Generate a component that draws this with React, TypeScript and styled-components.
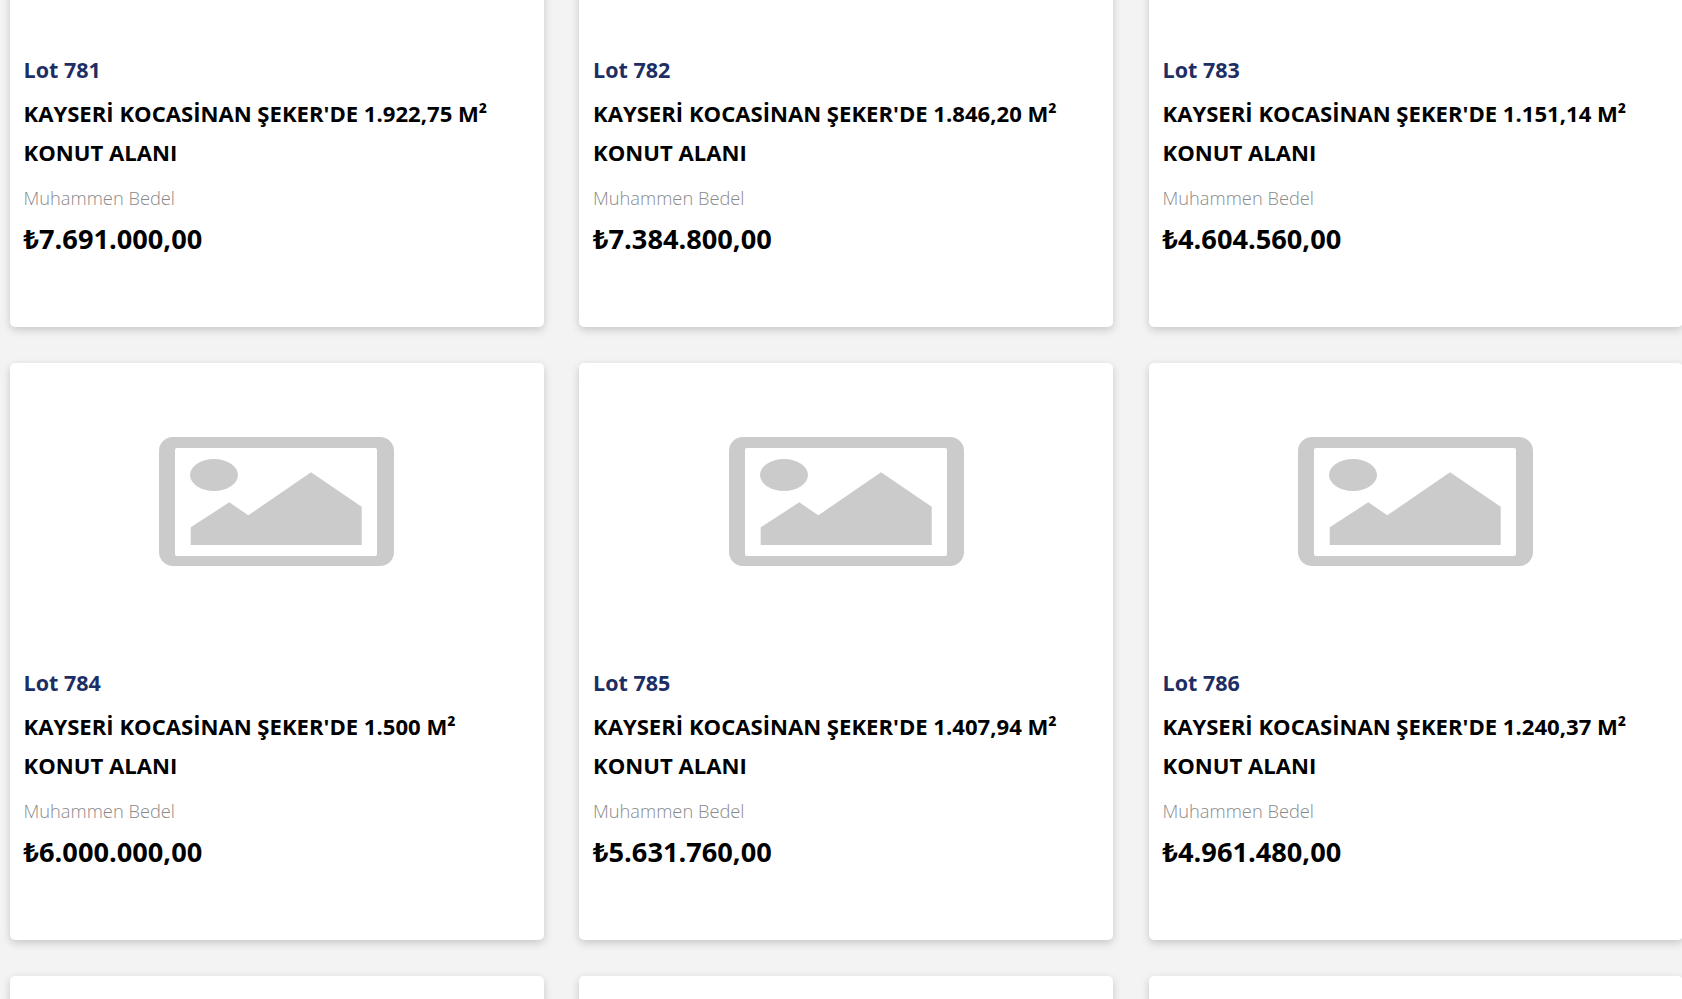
import React from "react";
import styled, { createGlobalStyle } from "styled-components";

interface Lot {
  no: number;
  area: string;
  price: string;
}

const lots: Lot[] = [
  { no: 781, area: "1.922,75", price: "7.691.000,00" },
  { no: 782, area: "1.846,20", price: "7.384.800,00" },
  { no: 783, area: "1.151,14", price: "4.604.560,00" },
  { no: 784, area: "1.500", price: "6.000.000,00" },
  { no: 785, area: "1.407,94", price: "5.631.760,00" },
  { no: 786, area: "1.240,37", price: "4.961.480,00" },
];

function PlaceholderIcon() {
  return (
    <svg width="235" height="129" viewBox="0 0 235 129">
      <path
        fillRule="evenodd"
        fill="#cbcbcb"
        d="M14 0H221A14 14 0 0 1 235 14V115A14 14 0 0 1 221 129H14A14 14 0 0 1 0 115V14A14 14 0 0 1 14 0ZM18 11A2 2 0 0 0 16 13V117A2 2 0 0 0 18 119H216A2 2 0 0 0 218 117V13A2 2 0 0 0 216 11Z"
      />
      <ellipse cx="55" cy="38" rx="24" ry="16" fill="#cbcbcb" />
      <path
        fill="#cbcbcb"
        d="M31.7 108V90.3L70.3 65.3L89.3 78.3L152 35.3L202.7 69.7V108Z"
      />
    </svg>
  );
}

function LotCard({ lot }: { lot: Lot }) {
  return (
    <Card>
      <Thumb>
        <PlaceholderIcon />
      </Thumb>
      <Body>
        <LotNo>{`Lot ${lot.no}`}</LotNo>
        <Title>{`KAYSERİ KOCASİNAN ŞEKER'DE ${lot.area} M² KONUT ALANI`}</Title>
        <PriceLabel>Muhammen Bedel</PriceLabel>
        <Price>{`₺${lot.price}`}</Price>
      </Body>
    </Card>
  );
}

export default function App() {
  return (
    <>
      <GlobalStyle />
      <Page>
        <Grid>
          {lots.map((lot) => (
            <LotCard key={lot.no} lot={lot} />
          ))}
          <Card />
          <Card />
          <Card />
        </Grid>
      </Page>
    </>
  );
}

const GlobalStyle = createGlobalStyle`
  html, body {
    margin: 0;
    padding: 0;
    background: #f3f3f3;
  }
`;

const Page = styled.div`
  height: 999px;
  overflow: hidden;
  font-family: "Open Sans", "Noto Sans", sans-serif;
`;

const Grid = styled.div`
  display: grid;
  grid-template-columns: repeat(3, 534px);
  column-gap: 35.5px;
  row-gap: 36px;
  margin-top: -250px;
  padding-left: 9.5px;
`;

const Card = styled.div`
  height: 577px;
  background: #fff;
  border-radius: 5px;
  box-shadow: 0 3px 8px rgba(0, 0, 0, 0.18);
  display: flex;
  flex-direction: column;
`;

const Thumb = styled.div`
  height: 277px;
  flex: none;
  display: flex;
  align-items: center;
  justify-content: center;
`;

const Body = styled.div`
  padding: 29px 14px 0;
`;

const LotNo = styled.div`
  font-size: 21.5px;
  line-height: 27px;
  font-weight: 700;
  color: #1d2e64;
`;

const Title = styled.div`
  margin-top: 11px;
  font-size: 22.1px;
  line-height: 39px;
  font-weight: 700;
  color: #000;
`;

const PriceLabel = styled.div`
  margin-top: 14px;
  font-size: 18.3px;
  line-height: 24px;
  font-weight: 300;
  color: #8a8a8a;
`;

const Price = styled.div`
  margin-top: 11px;
  font-size: 27.2px;
  line-height: 35px;
  font-weight: 700;
  color: #000;
`;
